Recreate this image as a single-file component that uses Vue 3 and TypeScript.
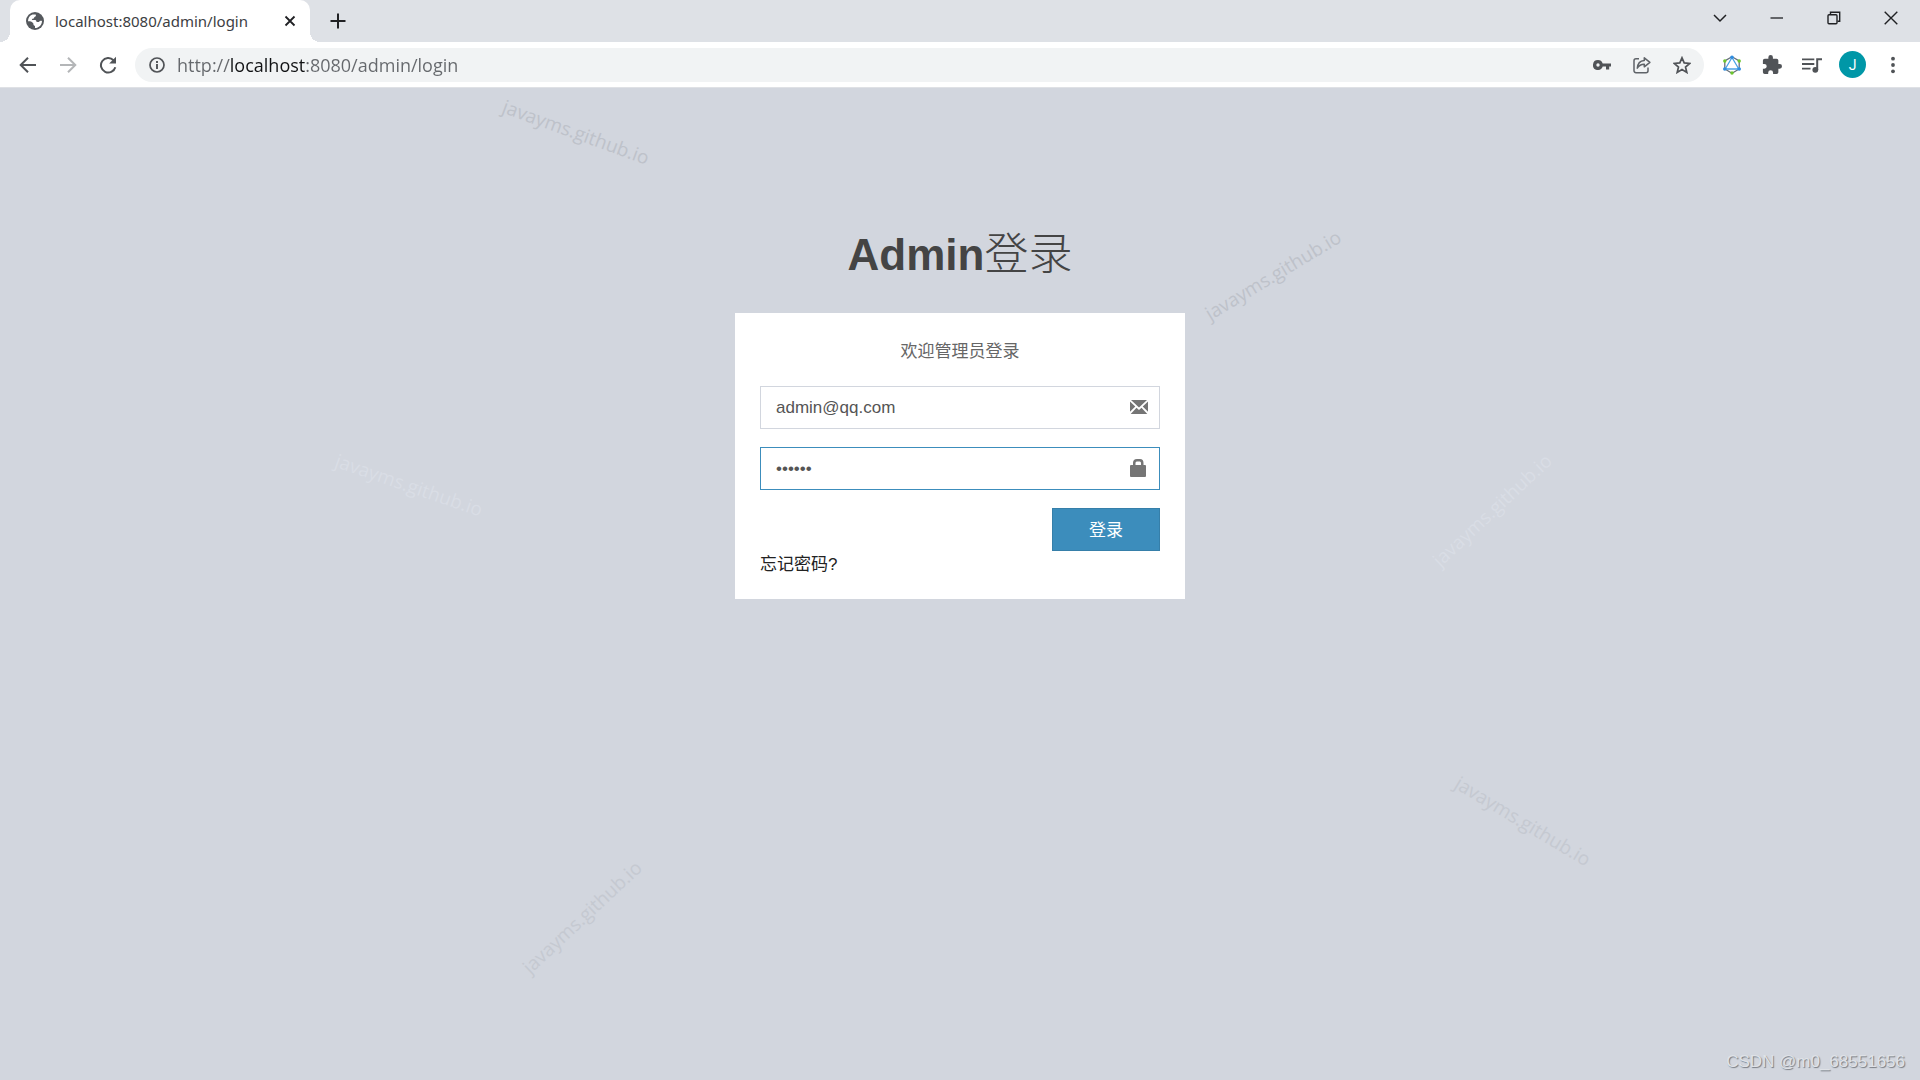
<script setup lang="ts">
import { ref } from 'vue'

interface Mark {
  x: number
  y: number
  angle: number
  tone: 'dark' | 'mid' | 'light'
}

const address = ref('http://localhost:8080/admin/login')
const email = ref('admin@qq.com')
const password = ref('123456')

// Centres are percentages of the page area
const marks: Mark[] = [
  { x: 30, y: 4.4, angle: 20, tone: 'dark' },
  { x: 66.3, y: 18.9, angle: -31, tone: 'dark' },
  { x: 21.3, y: 40, angle: 19, tone: 'light' },
  { x: 77.7, y: 42.5, angle: -43, tone: 'light' },
  { x: 79.3, y: 73.9, angle: 31, tone: 'mid' },
  { x: 30.3, y: 83.6, angle: -43, tone: 'mid' }
]
</script>

<template>
  <div class="window">
    <header class="tab-strip">
      <div class="tab">
        <svg class="globe" width="18" height="18" viewBox="0 0 18 18">
          <circle cx="9" cy="9" r="9" fill="#55595d" />
          <path d="M2 9.3C2 6 3.500 3.200 6.500 2.400H9.700C10.400 3.500 9.700 4.600 8.300 4.900 8.400 6 7.600 6.600 6.400 6.700L5.800 8.100H9.200C10.300 8.300 10.200 9.600 10.800 9.900H13C13.500 8.800 14.600 8.500 16 8.900 15.900 12.700 13 15.900 9 16V14.100C7.600 13.700 7.300 12.800 7.400 11.600 6.600 10.300 5.400 9.500 3.900 9.300Z" fill="#fff" />
        </svg>
        <span class="tab-title">localhost:8080/admin/login</span>
        <button class="icon-btn" type="button" aria-label="Close tab">
          <svg width="12" height="12" viewBox="0 0 12 12"><path d="M1.500 1.500 10.500 10.500M10.500 1.500 1.500 10.500" stroke="#202124" stroke-width="1.800" /></svg>
        </button>
      </div>
      <button class="icon-btn new-tab" type="button" aria-label="New tab">
        <svg width="16" height="16" viewBox="0 0 16 16"><path d="M8 0.500V15.500M0.500 8H15.500" stroke="#202124" stroke-width="2" /></svg>
      </button>
      <div class="window-controls">
        <button class="icon-btn" type="button" aria-label="Search tabs">
          <svg width="14" height="14" viewBox="0 0 14 14"><path d="M1 4 7 10 13 4" fill="none" stroke="#202124" stroke-width="1.500" /></svg>
        </button>
        <button class="icon-btn" type="button" aria-label="Minimize">
          <svg width="14" height="14" viewBox="0 0 14 14"><path d="M0.500 7H13" stroke="#202124" stroke-width="1.300" /></svg>
        </button>
        <button class="icon-btn" type="button" aria-label="Restore">
          <svg width="14" height="14" viewBox="0 0 14 14" fill="none" stroke="#202124" stroke-width="1.400"><rect x="1" y="3.700" width="9" height="9" rx="1" /><path d="M3.500 3.500V1.300H12.700V10.300H10.500" /></svg>
        </button>
        <button class="icon-btn" type="button" aria-label="Close">
          <svg width="14" height="14" viewBox="0 0 14 14"><path d="M0.700 0.700 13.300 13.300M13.300 0.700 0.700 13.300" stroke="#202124" stroke-width="1.400" /></svg>
        </button>
      </div>
    </header>

    <nav class="toolbar">
      <div class="nav-buttons">
        <button class="icon-btn" type="button" aria-label="Back">
          <svg width="18" height="18" viewBox="0 0 18 18" fill="none" stroke="#505357" stroke-width="2"><path d="M17 9H2M9 1.700 1.700 9 9 16.300" /></svg>
        </button>
        <button class="icon-btn" type="button" aria-label="Forward">
          <svg width="18" height="18" viewBox="0 0 18 18" fill="none" stroke="#b4b6b8" stroke-width="2"><path d="M1 9H16M9 1.700 16.300 9 9 16.300" /></svg>
        </button>
        <button class="icon-btn" type="button" aria-label="Reload">
          <svg width="18" height="18" viewBox="0 0 18 18"><path d="M16.300 11.200A7.300 7.300 0 1 1 14.500 4.200" fill="none" stroke="#505357" stroke-width="2" /><path d="M17 0.800V7.600H10.200Z" fill="#505357" /></svg>
        </button>
      </div>
      <div class="omnibox">
        <svg class="info" width="16" height="16" viewBox="0 0 16 16"><circle cx="8" cy="8" r="7" fill="none" stroke="#505357" stroke-width="1.700" /><path d="M8 7V12M8 4V5.900" stroke="#505357" stroke-width="1.900" /></svg>
        <input v-model="address" class="address" type="text" aria-label="Address" />
        <button class="icon-btn" type="button" aria-label="Passwords">
          <svg width="18" height="18" viewBox="0 0 18 18"><path fill="#505357" fill-rule="evenodd" d="M5 4A5 5 0 1 0 9.700 10.600H13V13.600H16.200V10.600H18V7.400H9.700A5 5 0 0 0 5 4ZM5 7.300A1.700 1.700 0 1 1 5 10.700 1.700 1.700 0 0 1 5 7.300Z" /></svg>
        </button>
        <button class="icon-btn" type="button" aria-label="Share">
          <svg width="18" height="18" viewBox="0 0 18 18" fill="none" stroke="#5f6368" stroke-width="1.500"><path d="M6 2.800H3A2 2 0 0 0 1 4.800V14.700A2 2 0 0 0 3 16.700H13A2 2 0 0 0 15 14.700V11.500" /><path d="M11.300 1.800 16.900 6.300 11.300 10.800V8.300C8 8.200 6 9.500 4.300 12.200 4.600 8 7 4.700 11.300 4.400Z" stroke-linejoin="round" /></svg>
        </button>
        <button class="icon-btn" type="button" aria-label="Bookmark">
          <svg width="18" height="18" viewBox="0 0 18 18"><path d="M9 1.800 11.200 6.900 16.700 7.400 12.500 11 13.800 16.400 9 13.500 4.200 16.400 5.500 11 1.300 7.400 6.800 6.900Z" fill="none" stroke="#505357" stroke-width="1.700" /></svg>
        </button>
      </div>
      <div class="extensions">
        <button class="icon-btn" type="button" aria-label="Extension">
          <svg width="20" height="20" viewBox="0 0 20 20">
            <path d="M10 1.800 17.200 5.900V14L10 18.200 2.800 14V5.900Z" fill="none" stroke="#66707a" stroke-width="1.300" />
            <path d="M10 2.500 3.200 14H16.800Z" fill="#fff" stroke="#4aa1e6" stroke-width="1.300" />
            <g fill="#2f8de0"><circle cx="10" cy="2.200" r="1.800" /><circle cx="2.800" cy="14" r="1.800" /><circle cx="17.200" cy="14" r="1.800" /></g>
            <g fill="#6cc52d"><circle cx="2.800" cy="6" r="1.700" /><circle cx="17.200" cy="6" r="1.700" /><circle cx="10" cy="18" r="1.700" /></g>
          </svg>
        </button>
        <button class="icon-btn" type="button" aria-label="Extensions">
          <svg width="20" height="20" viewBox="1 1 22 22"><path fill="#505357" d="M20.500 11H19V7a2 2 0 0 0-2-2h-4V3.500a2.500 2.500 0 0 0-5 0V5H4a2 2 0 0 0-2 2v3.800h1.500a2.700 2.700 0 0 1 0 5.400H2V20a2 2 0 0 0 2 2h3.800v-1.500a2.700 2.700 0 0 1 5.400 0V22H17a2 2 0 0 0 2-2v-4h1.500a2.500 2.500 0 0 0 0-5z" /></svg>
        </button>
        <button class="icon-btn" type="button" aria-label="Media">
          <svg width="20" height="20" viewBox="0 0 20 20"><path d="M0 4.300H12.300M0 9H12.300M0 13.600H8.500" stroke="#505357" stroke-width="1.800" /><path d="M15.200 15V4.300H20" fill="none" stroke="#505357" stroke-width="2" /><circle cx="13.300" cy="14.800" r="2.900" fill="#505357" /></svg>
        </button>
        <button class="avatar" type="button" aria-label="Profile J">J</button>
        <button class="icon-btn" type="button" aria-label="Menu">
          <svg width="20" height="20" viewBox="0 0 20 20" fill="#505357"><circle cx="10" cy="3.700" r="1.900" /><circle cx="10" cy="10" r="1.900" /><circle cx="10" cy="16.300" r="1.900" /></svg>
        </button>
      </div>
    </nav>

    <main class="page">
      <h1 class="logo"><b>Admin</b>登录</h1>
      <form class="login-box" @submit.prevent>
        <p class="message">欢迎管理员登录</p>
        <div class="field">
          <input v-model="email" type="email" aria-label="邮箱" />
          <svg class="field-icon" width="18" height="18" viewBox="0 -1 18 18"><path fill="#757575" d="M1 1H17L9 8.500ZM0 2.600 5.300 7.600 0 12.800ZM18 2.600V12.800L12.700 7.600ZM6.500 8.700 9 11 11.500 8.700 17.300 15H0.700Z" /></svg>
        </div>
        <div class="field">
          <input v-model="password" class="active" type="password" aria-label="密码" />
          <svg class="field-icon" width="18" height="18" viewBox="0 0 18 18"><path fill="#757575" fill-rule="evenodd" d="M1 6H3V4Q3 0 7 0H10Q13.500 0 13.500 4V6H15Q16 6 16 7V17Q16 18 15 18H1Q0 18 0 17V7Q0 6 1 6ZM5.500 6H11V4Q11 2.500 9.800 2.500H6.800Q5.500 2.500 5.500 4Z" /></svg>
        </div>
        <button class="submit" type="submit">登录</button>
        <a class="forgot" href="#">忘记密码?</a>
      </form>

      <span
        v-for="(mark, index) in marks"
        :key="index"
        class="mark"
        :class="mark.tone"
        :style="{ left: mark.x + '%', top: mark.y + '%', transform: `translate(-50%, -50%) rotate(${mark.angle}deg)` }"
      >javayms.github.io</span>
      <span class="credit">CSDN @m0_68551656</span>
    </main>
  </div>
</template>

<style>
body {
  margin: 0;
  background: #d2d6de;
}
</style>

<style scoped>
* {
  box-sizing: border-box;
}

.window {
  display: flex;
  flex-direction: column;
  min-height: 100vh;
  font-family: "Open Sans", "Noto Sans", sans-serif;
}

svg {
  display: block;
  flex: none;
}

button {
  padding: 0;
  border: 0;
  background: none;
  font: inherit;
}

.icon-btn {
  display: grid;
  place-items: center;
}

.tab-strip {
  display: flex;
  align-items: flex-start;
  height: 42px;
  padding-left: 10px;
  background: #dee1e6;
}

.tab {
  position: relative;
  display: flex;
  align-items: center;
  width: 300px;
  height: 42px;
  padding: 0 14px 0 16px;
  border-radius: 10px 10px 0 0;
  background: #fff;
}

.tab::before,
.tab::after {
  content: "";
  position: absolute;
  bottom: 0;
  width: 10px;
  height: 10px;
}

.tab::before {
  left: -10px;
  background: radial-gradient(circle at 0 0, transparent 10px, #fff 10px);
}

.tab::after {
  right: -10px;
  background: radial-gradient(circle at 100% 0, transparent 10px, #fff 10px);
}

.tab-title {
  flex: 1;
  margin-left: 11px;
  color: #3c4043;
  font-family: "Noto Sans", sans-serif;
  font-size: 15px;
  line-height: 20px;
}

.new-tab {
  width: 55px;
  height: 42px;
}

.window-controls {
  display: flex;
  margin-left: auto;
  padding-right: 1px;
}

.window-controls .icon-btn {
  width: 57px;
  height: 36px;
}

.toolbar {
  display: flex;
  align-items: center;
  height: 46px;
  border-bottom: 1px solid #dfe1e5;
  background: #fff;
}

.nav-buttons {
  display: flex;
  gap: 22px;
  padding: 0 18px 0 19px;
}

.omnibox {
  display: flex;
  flex: 1;
  align-items: center;
  gap: 22px;
  height: 34px;
  padding: 0 13px 0 14px;
  border-radius: 17px;
  background: #f1f3f4;
}

.info {
  margin-right: -18px;
}

.address {
  flex: 1;
  min-width: 0;
  height: 34px;
  padding: 0 0 0 8px;
  border: 0;
  outline: 0;
  background: linear-gradient(to right, #65686c 62px, #111214 62px, #111214 137px, #65686c 137px);
  -webkit-background-clip: text;
  background-clip: text;
  color: transparent;
  font: 18px "Open Sans", "Noto Sans", sans-serif;
}

.extensions {
  display: flex;
  align-items: center;
  gap: 20px;
  padding: 0 17px 0 18px;
}

.avatar {
  width: 27px;
  height: 27px;
  margin: 0 -3px;
  border-radius: 50%;
  background: #0097a7;
  color: #fff;
  font-family: Roboto, sans-serif;
  font-size: 14px;
}

.page {
  position: relative;
  display: flex;
  flex: 1;
  flex-direction: column;
  align-items: center;
  padding: 135px 20px 60px;
  overflow: hidden;
  background: #d2d6de;
  color: #444;
  font-family: "Liberation Sans", "Noto Sans CJK SC", sans-serif;
}

.logo {
  margin: 0 0 27px;
  font-size: 44px;
  font-weight: 300;
  line-height: 63px;
}

.logo b {
  font-weight: 700;
}

.login-box {
  display: flex;
  flex-direction: column;
  width: 100%;
  max-width: 450px;
  padding: 26px 25px 21px;
  background: #fff;
  font-size: 17px;
  line-height: 25px;
}

.message {
  margin: 0 0 22px;
  color: #666;
  text-align: center;
}

.field {
  position: relative;
  margin-bottom: 18px;
}

.field input {
  display: block;
  width: 100%;
  height: 43px;
  padding: 0 52px 0 15px;
  border: 1px solid #d2d6de;
  border-radius: 0;
  outline: 0;
  background: #fff;
  color: #555;
  font: 17px "Liberation Sans", sans-serif;
}

.field input.active {
  border-color: #3c8dbc;
}

.field-icon {
  position: absolute;
  top: 12px;
  right: 12px;
}

.submit {
  align-self: flex-end;
  width: 108px;
  height: 43px;
  padding-top: 2px;
  border: 1px solid #367fa9;
  background: #3c8dbc;
  color: #fff;
}

.forgot {
  align-self: flex-start;
  color: #222;
  line-height: 27px;
  text-decoration: none;
}

.mark {
  position: absolute;
  font-family: "Open Sans", "Noto Sans", sans-serif;
  font-size: 19px;
  line-height: 26px;
  white-space: nowrap;
  pointer-events: none;
}

.dark {
  color: #bec2ca;
}

.mid {
  color: #c5c9d1;
}

.light {
  color: #d9dde5;
}

.credit {
  position: absolute;
  right: 15px;
  bottom: 8px;
  color: #dfe2e7;
  font-size: 17px;
  line-height: 20px;
  text-shadow: 1px 1px 1px #777b82;
}
</style>
